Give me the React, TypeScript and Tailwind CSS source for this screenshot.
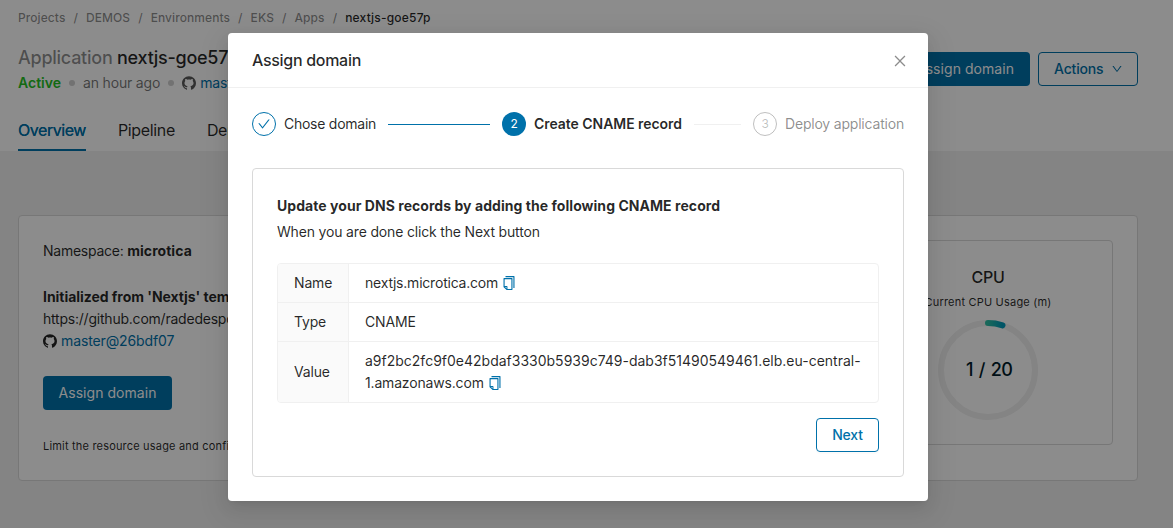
import type { ReactNode } from "react";
import { AiOutlineCheck, AiOutlineClose, AiOutlineCopy, AiOutlineDown, AiOutlineGithub } from "react-icons/ai";

const crumbs = ["Projects", "DEMOS", "Environments", "EKS", "Apps"];

const tabs = ["Overview", "Pipeline", "Deploy"];

function Breadcrumb() {
  return (
    <nav className="flex h-[18px] items-center text-xs font-medium tracking-[0.08px] text-black/45">
      {crumbs.map((crumb) => (
        <span key={crumb} className="flex">
          <span>{crumb}</span>
          <span className="mx-2">/</span>
        </span>
      ))}
      <span className="tracking-[0.2px] text-black/85">nextjs-goe57p</span>
    </nav>
  );
}

function PageHeader() {
  return (
    <header className="h-[151px] bg-white pt-[9px] pr-[35px] pl-[18px]">
      <Breadcrumb />
      <div className="mt-[17px] flex h-[54px] justify-between">
        <div>
          <h1 className="h-7 text-lg leading-7 font-medium tracking-[-0.25px] text-black/85">
            <span className="text-black/45">Application</span> nextjs-goe57p
          </h1>
          <div className="flex h-[22px] items-center">
            <span className="font-semibold tracking-normal text-[#25c125]">Active</span>
            <span className="mx-2 size-1.5 rounded-full bg-[#d0d0d0]" />
            <span className="text-black/55">an hour ago</span>
            <span className="mx-2 size-1.5 rounded-full bg-[#d0d0d0]" />
            <AiOutlineGithub className="-ml-px mr-[3px] size-4 text-black/65" />
            <span className="text-[#0071aa]">master@26bdf07</span>
          </div>
        </div>
        <div className="mt-2 flex gap-2">
          <button className="h-[34px] rounded bg-[#0071aa] px-4 tracking-[0.05px] text-white">Assign domain</button>
          <button className="flex h-[34px] w-[100px] items-center justify-between rounded border border-[#0071aa] pr-[14px] pl-[15px] font-medium text-[#0071aa]">
            Actions
            <AiOutlineDown className="size-3" />
          </button>
        </div>
      </div>
      <div className="mt-3 flex h-[41px] gap-8 text-base tracking-[-0.45px]">
        {tabs.map((tab, i) => (
          <div
            key={tab}
            className={
              i === 0
                ? "border-b-2 border-[#0071aa] pt-2 text-[#0071aa] [text-shadow:0_0_0.25px_currentColor]"
                : "pt-2 tracking-[-0.35px] text-black/85"
            }
          >
            {tab}
          </div>
        ))}
      </div>
    </header>
  );
}

function CpuGauge() {
  return (
    <div className="flex h-[205px] w-[250px] flex-col items-center rounded border border-[#d9d9d9] pt-6">
      <div className="text-base font-medium tracking-[-0.3px]">CPU</div>
      <div className="mt-1 text-[11px] leading-[18px] tracking-[0.2px]">Current CPU Usage (m)</div>
      <div className="relative mt-[9px] flex size-[100px] items-center justify-center">
        <svg viewBox="0 0 100 100" fill="none" strokeWidth="6" className="absolute inset-0 size-full">
          <defs>
            <linearGradient id="cpu" x1="0" x2="1" y1="0" y2="0">
              <stop offset="0" stopColor="#2ebda5" />
              <stop offset="1" stopColor="#009abb" />
            </linearGradient>
          </defs>
          <circle cx="50" cy="50" r="47" stroke="#f0f0f0" />
          <path d="M50 3A47 47 0 0 1 64.5 5.3" stroke="url(#cpu)" strokeLinecap="round" />
        </svg>
        <span className="pl-0.5 text-lg font-medium tracking-[-0.7px] text-[#001c2b] [word-spacing:2px]">1 / 20</span>
      </div>
    </div>
  );
}

function OverviewCard() {
  return (
    <section className="mt-16 mr-[35px] ml-[18px] flex h-[266px] justify-between rounded border border-[#d9d9d9] bg-white p-6">
      <div className="leading-[22px]">
        <div className="tracking-[-0.25px]">
          Namespace: <b className="font-bold tracking-[0.05px]">microtica</b>
        </div>
        <div className="mt-6 font-bold tracking-[-0.04px]">Initialized from 'Nextjs' temp</div>
        <div className="tracking-[-0.22px]">https://github.com/radedespot</div>
        <div className="flex items-center">
          <AiOutlineGithub className="-ml-px mr-[3px] size-4" />
          <span className="tracking-[-0.12px] text-[#0071aa]">master@26bdf07</span>
        </div>
        <button className="mt-6 block h-[34px] w-[129px] rounded bg-[#0071aa] tracking-[0.05px] text-white">
          Assign domain
        </button>
        <div className="mt-[25px] text-[11px] tracking-[0.19px]">Limit the resource usage and config</div>
      </div>
      <CpuGauge />
    </section>
  );
}

function Steps() {
  return (
    <div className="flex h-6 items-center">
      <span className="flex size-6 items-center justify-center rounded-full border border-[#0071aa] text-[#0071aa]">
        <AiOutlineCheck className="size-3.5" />
      </span>
      <span className="ml-2 tracking-[-0.26px]">Chose domain</span>
      <span className="mx-3 h-px w-[102px] bg-[#0071aa]" />
      <span className="flex size-6 items-center justify-center rounded-full bg-[#0071aa] text-xs text-white">2</span>
      <span className="ml-2 font-semibold tracking-[-0.05px]">Create CNAME record</span>
      <span className="mx-3 h-px flex-1 bg-[#f0f0f0]" />
      <span className="flex size-6 items-center justify-center rounded-full border border-black/25 text-xs text-black/25">
        3
      </span>
      <span className="ml-2 tracking-[-0.2px] text-black/45">Deploy application</span>
    </div>
  );
}

function CopyIcon() {
  return <AiOutlineCopy className="ml-[3px] inline size-4 align-[-3px] text-[#0071aa]" />;
}

function RecordRow({ label, children }: { label: string; children: ReactNode }) {
  return (
    <div className="flex border-b border-[#f0f0f0] last:border-b-0">
      <div className="flex w-[71px] items-center border-r border-[#f0f0f0] bg-[#fafafa] pl-4">{label}</div>
      <div className="flex-1 py-2 pl-4 leading-[22px]">{children}</div>
    </div>
  );
}

function AssignDomainModal() {
  return (
    <div className="h-[468px] w-[700px] rounded bg-white shadow-[0_3px_6px_-4px_rgba(0,0,0,0.12),0_6px_16px_0_rgba(0,0,0,0.08),0_9px_28px_8px_rgba(0,0,0,0.05)]">
      <div className="flex h-[55px] items-center justify-between border-b border-[#f0f0f0] pr-5 pl-6">
        <h2 className="text-base font-medium tracking-[-0.3px]">Assign domain</h2>
        <AiOutlineClose className="mt-0.5 size-4 text-black/45" />
      </div>
      <div className="p-6">
        <Steps />
        <div className="mt-8 h-[309px] rounded border border-[#d9d9d9] px-6 pt-[26px]">
          <div className="leading-[22px] font-bold tracking-[0.05px]">
            Update your DNS records by adding the following CNAME record
          </div>
          <div className="mt-1 leading-[22px]">When you are done click the Next button</div>
          <div className="mt-5 overflow-hidden rounded border border-[#f0f0f0]">
            <RecordRow label="Name">
              <span className="tracking-[-0.21px]">nextjs.microtica.com</span>
              <CopyIcon />
            </RecordRow>
            <RecordRow label="Type">CNAME</RecordRow>
            <RecordRow label="Value">
              <span className="tracking-normal">a9f2bc2fc9f0e42bdaf3330b5939c749-dab3f51490549461.elb.eu-central-</span>
              <br />
              1.amazonaws.com
              <CopyIcon />
            </RecordRow>
          </div>
          <div className="mt-[15px] flex justify-end">
            <button className="h-[34px] w-[63px] rounded border border-[#0071aa] font-medium text-[#0071aa] shadow-[0_2px_0_rgba(0,0,0,0.015)]">
              Next
            </button>
          </div>
        </div>
      </div>
    </div>
  );
}

export default function App() {
  return (
    <div className="relative h-[528px] w-[1173px] overflow-hidden bg-[#f0f0f0] font-['Inter',sans-serif] text-sm tracking-[-0.17px] text-black/85">
      <PageHeader />
      <OverviewCard />
      <div className="absolute inset-0 flex items-start bg-black/45 pt-[33px] pl-[228px]">
        <AssignDomainModal />
      </div>
    </div>
  );
}
